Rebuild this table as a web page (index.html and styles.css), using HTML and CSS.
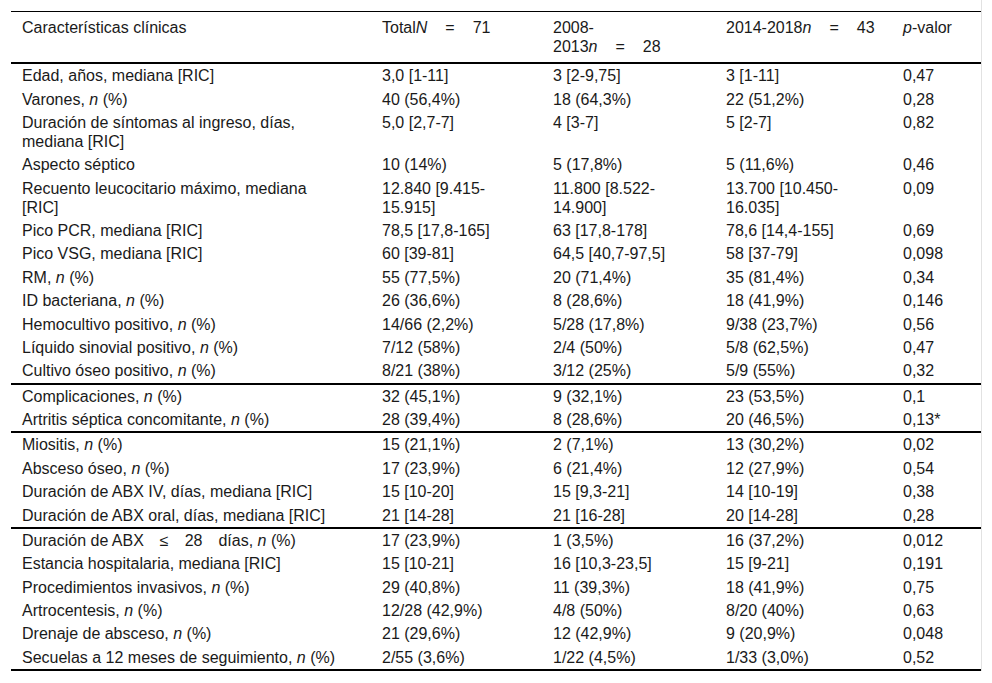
FILE: index.html
```html
<!DOCTYPE html>
<html lang="es">
<head>
<meta charset="utf-8">
<title>Características clínicas</title>
<link rel="stylesheet" href="styles.css">
</head>
<body>
<div class="wrap">
<table class="data">
<colgroup>
<col class="c1"><col class="c2"><col class="c3"><col class="c4"><col class="c5">
</colgroup>
<thead>
<tr>
<th>Características clínicas</th>
<th>Total<i>N</i><span class="eq">=</span>71</th>
<th>2008-<br>2013<i>n</i><span class="eq">=</span>28</th>
<th>2014-2018<i>n</i><span class="eq">=</span>43</th>
<th><i>p</i>-valor</th>
</tr>
</thead>
<tbody>
<tr><td>Edad, años, mediana [RIC]</td><td>3,0 [1-11]</td><td>3 [2-9,75]</td><td>3 [1-11]</td><td>0,47</td></tr>
<tr><td>Varones, <i>n</i> (%)</td><td>40 (56,4%)</td><td>18 (64,3%)</td><td>22 (51,2%)</td><td>0,28</td></tr>
<tr><td>Duración de síntomas al ingreso, días, mediana [RIC]</td><td>5,0 [2,7-7]</td><td>4 [3-7]</td><td>5 [2-7]</td><td>0,82</td></tr>
<tr><td>Aspecto séptico</td><td>10 (14%)</td><td>5 (17,8%)</td><td>5 (11,6%)</td><td>0,46</td></tr>
<tr><td>Recuento leucocitario máximo, mediana [RIC]</td><td>12.840 [9.415-15.915]</td><td>11.800 [8.522-14.900]</td><td>13.700 [10.450-16.035]</td><td>0,09</td></tr>
<tr><td>Pico PCR, mediana [RIC]</td><td>78,5 [17,8-165]</td><td>63 [17,8-178]</td><td>78,6 [14,4-155]</td><td>0,69</td></tr>
<tr><td>Pico VSG, mediana [RIC]</td><td>60 [39-81]</td><td>64,5 [40,7-97,5]</td><td>58 [37-79]</td><td>0,098</td></tr>
<tr><td>RM, <i>n</i> (%)</td><td>55 (77,5%)</td><td>20 (71,4%)</td><td>35 (81,4%)</td><td>0,34</td></tr>
<tr><td>ID bacteriana, <i>n</i> (%)</td><td>26 (36,6%)</td><td>8 (28,6%)</td><td>18 (41,9%)</td><td>0,146</td></tr>
<tr><td>Hemocultivo positivo, <i>n</i> (%)</td><td>14/66 (2,2%)</td><td>5/28 (17,8%)</td><td>9/38 (23,7%)</td><td>0,56</td></tr>
<tr><td>Líquido sinovial positivo, <i>n</i> (%)</td><td>7/12 (58%)</td><td>2/4 (50%)</td><td>5/8 (62,5%)</td><td>0,47</td></tr>
<tr class="sep"><td>Cultivo óseo positivo, <i>n</i> (%)</td><td>8/21 (38%)</td><td>3/12 (25%)</td><td>5/9 (55%)</td><td>0,32</td></tr>
<tr><td>Complicaciones, <i>n</i> (%)</td><td>32 (45,1%)</td><td>9 (32,1%)</td><td>23 (53,5%)</td><td>0,1</td></tr>
<tr class="sep"><td>Artritis séptica concomitante, <i>n</i> (%)</td><td>28 (39,4%)</td><td>8 (28,6%)</td><td>20 (46,5%)</td><td>0,13*</td></tr>
<tr><td>Miositis, <i>n</i> (%)</td><td>15 (21,1%)</td><td>2 (7,1%)</td><td>13 (30,2%)</td><td>0,02</td></tr>
<tr><td>Absceso óseo, <i>n</i> (%)</td><td>17 (23,9%)</td><td>6 (21,4%)</td><td>12 (27,9%)</td><td>0,54</td></tr>
<tr><td>Duración de ABX IV, días, mediana [RIC]</td><td>15 [10-20]</td><td>15 [9,3-21]</td><td>14 [10-19]</td><td>0,38</td></tr>
<tr class="sep"><td>Duración de ABX oral, días, mediana [RIC]</td><td>21 [14-28]</td><td>21 [16-28]</td><td>20 [14-28]</td><td>0,28</td></tr>
<tr><td>Duración de ABX&emsp;≤&emsp;28&emsp;días, <i>n</i> (%)</td><td>17 (23,9%)</td><td>1 (3,5%)</td><td>16 (37,2%)</td><td>0,012</td></tr>
<tr><td>Estancia hospitalaria, mediana [RIC]</td><td>15 [10-21]</td><td>16 [10,3-23,5]</td><td>15 [9-21]</td><td>0,191</td></tr>
<tr><td>Procedimientos invasivos, <i>n</i> (%)</td><td>29 (40,8%)</td><td>11 (39,3%)</td><td>18 (41,9%)</td><td>0,75</td></tr>
<tr><td>Artrocentesis, <i>n</i> (%)</td><td>12/28 (42,9%)</td><td>4/8 (50%)</td><td>8/20 (40%)</td><td>0,63</td></tr>
<tr><td>Drenaje de absceso, <i>n</i> (%)</td><td>21 (29,6%)</td><td>12 (42,9%)</td><td>9 (20,9%)</td><td>0,048</td></tr>
<tr><td>Secuelas a 12 meses de seguimiento, <i>n</i> (%)</td><td>2/55 (3,6%)</td><td>1/22 (4,5%)</td><td>1/33 (3,0%)</td><td>0,52</td></tr>
</tbody>
</table>
</div>
</body>
</html>
```

FILE: styles.css
```css
html, body {
  margin: 0;
  padding: 0;
  background: #fff;
}

body {
  font-family: "Liberation Sans", Arial, sans-serif;
  font-size: 16px;
  color: #1a1a1a;
}

.wrap {
  width: 970px;
  padding: 11px 0 0 11px;
  border-right: 1px solid #e2e2e2;
}

.data {
  width: 970px;
  table-layout: fixed;
  border-collapse: collapse;
  border-top: 1px solid #000;
  border-bottom: 2px solid #000;
}

.c1 { width: 360px; }
.c2 { width: 171px; }
.c3 { width: 173px; }
.c4 { width: 177px; }
.c5 { width: 89px; }

.data th,
.data td {
  text-align: left;
  vertical-align: top;
  line-height: 19px;
  padding: 2.2px 32px 2.2px 11px;
}

.data th:last-child,
.data td:last-child {
  padding-right: 4px;
}

.data th {
  font-weight: normal;
  white-space: nowrap;
  padding-top: 6px;
  padding-bottom: 6px;
}

.data th .eq {
  padding: 0 18px;
}

.data thead tr {
  border-bottom: 2px solid #000;
}

.data tr.sep {
  border-bottom: 2px solid #000;
}

.data i {
  font-style: italic;
}
```
